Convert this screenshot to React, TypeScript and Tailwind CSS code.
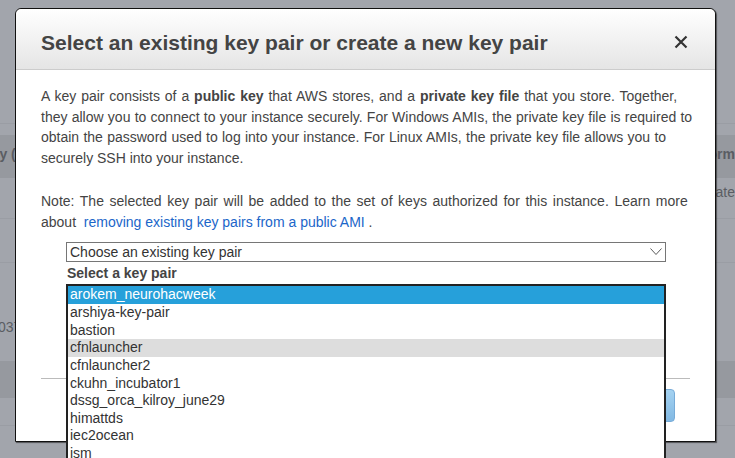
import React from "react";

const keys = [
  "arokem_neurohacweek",
  "arshiya-key-pair",
  "bastion",
  "cfnlauncher",
  "cfnlauncher2",
  "ckuhn_incubator1",
  "dssg_orca_kilroy_june29",
  "himattds",
  "iec2ocean",
  "ism",
  "jupyterhub",
];

export default function App() {
  return (
    <div
      className="relative w-[735px] h-[458px] overflow-hidden bg-[#a2a5ac] text-[14px]"
      style={{ fontFamily: '"Liberation Sans", Arial, sans-serif' }}
    >
      {/* background page (dimmed) */}
      <div className="flex flex-col w-full h-full text-[#5a5d63]">
        <div className="h-[124px] border-b border-[#9a9da4]" />
        <div className="h-[11px]" />
        <div className="h-[43px] bg-[#96999f] flex items-center font-bold pb-[4px]">
          <span className="-ml-[6px] w-[712px]">ry (</span>
          <span>Form</span>
        </div>
        <div className="h-[41px] border-b border-[#9a9da4] flex items-center pb-[12px]">
          <span className="w-[690px]" />
          <span>Update</span>
        </div>
        <div className="h-[44px] border-b border-[#9a9da4]" />
        <div className="h-[98px] flex items-start pt-[54px]">
          <span className="-ml-[2px]">0371</span>
        </div>
        <div className="h-[37px] bg-[#96999f]" />
        <div className="h-[28px] border-b border-[#9a9da4]" />
        <div className="flex-1" />
      </div>

      {/* modal */}
      <div className="absolute left-[15px] top-[8px] w-[701px] h-[434px] bg-white border border-[#111] rounded-t-[6px] shadow-[1px_1px_1px_rgba(0,0,0,0.5)] flex flex-col overflow-visible">
        <div className="h-[61px] shrink-0 rounded-t-[6px] bg-gradient-to-b from-white to-[#e5e5e5] border-b border-[#cccccc] flex items-start justify-between pl-[25px] pr-[27px] pt-[22px]">
          <h1 className="text-[21px] leading-[24px] font-bold text-[#444444]">
            Select an existing key pair or create a new key pair
          </h1>
          <svg width="14" height="14" viewBox="0 0 14 14" className="mt-[4px]">
            <path d="M1.5 1.5 L12.5 12.5 M12.5 1.5 L1.5 12.5" stroke="#333" strokeWidth="2.2" strokeLinecap="butt" />
          </svg>
        </div>

        <div className="flex-1 flex flex-col pl-[25px] pr-0 pt-[16px] text-[#444444] leading-[20.7px]">
          <p className="whitespace-nowrap">
            <span className="[word-spacing:1px]">
              A key pair consists of a <b>public key</b> that AWS stores, and a <b>private key file</b> that you store. Together,
            </span>
            <br />
            <span className="[word-spacing:0.35px]">
              they allow you to connect to your instance securely. For Windows AMIs, the private key file is required to
            </span>
            <br />
            <span className="[word-spacing:0.4px]">
              obtain the password used to log into your instance. For Linux AMIs, the private key file allows you to
            </span>
            <br />
            securely SSH into your instance.
          </p>
          <p className="mt-[22px] whitespace-nowrap">
            <span className="[word-spacing:1.7px]">
              Note: The selected key pair will be added to the set of keys authorized for this instance. Learn more
            </span>
            <br />
            about <span className="text-[#1b66c9]">&nbsp;removing existing key pairs from a public AMI</span> .
          </p>

          <div className="ml-[25px] w-[600px] mt-[10px] relative">
            <div className="h-[20px] border border-[#767676] flex items-center justify-between pl-[3px] pr-[3px] text-[#333] leading-[18px]">
              <span>Choose an existing key pair</span>
              <svg width="12" height="8" viewBox="0 0 12 8">
                <path d="M0.5 0.5 L6 6.5 L11.5 0.5" fill="none" stroke="#5a5a5a" strokeWidth="1" />
              </svg>
            </div>
            <div className="mt-[2px] leading-[18px] font-bold text-[#444] pl-[1px]">Select a key pair</div>

            <div className="absolute left-0 top-[42px] w-[600px] border-2 border-[#222] bg-white z-10 leading-[17.67px] text-[#333]">
              {keys.map((k, i) => (
                <div
                  key={k}
                  className={
                    i === 0
                      ? "h-[17.67px] pl-[2px] bg-[#26a0da] text-white"
                      : i === 3
                      ? "h-[17.67px] pl-[2px] bg-[#dddddd]"
                      : "h-[17.67px] pl-[2px]"
                  }
                >
                  {k}
                </div>
              ))}
            </div>
          </div>

          <div className="mt-auto mr-[25px] border-t border-[#bbbbbb] pt-[10px] pb-[19px] flex justify-end gap-[10px] pr-[15px]">
            <button className="h-[33px] w-[80px] rounded-[4px] border border-[#bbb] bg-gradient-to-b from-white to-[#e8e8e8] text-[#444] font-bold">
              Cancel
            </button>
            <button className="h-[33px] w-[150px] rounded-[4px] border border-[#78acd8] bg-gradient-to-b from-[#a4d2f1] to-[#82b9e3] text-white font-bold">
              Launch Instances
            </button>
          </div>
        </div>
      </div>
    </div>
  );
}
